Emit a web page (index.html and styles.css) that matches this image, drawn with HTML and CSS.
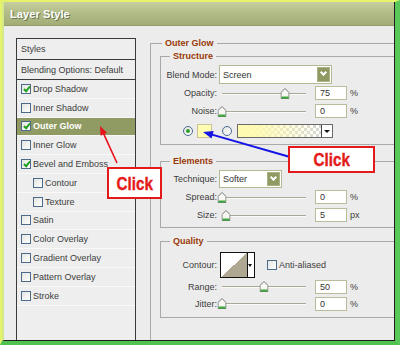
FILE: index.html
```html
<!DOCTYPE html>
<html>
<head>
<meta charset="utf-8">
<link rel="stylesheet" href="styles.css">
</head>
<body>
<div class="frame">
  <div class="dialog">
    <div class="titlebar"><span class="title">Layer Style</span></div>
    <div class="body">
      <div class="styles-list">
        <div class="head">Styles</div>
        <div class="head">Blending Options: Default</div>
        <div class="item"><span class="cb checked"></span>Drop Shadow</div>
        <div class="item"><span class="cb"></span>Inner Shadow</div>
        <div class="item selected"><span class="cb checked"></span>Outer Glow</div>
        <div class="item"><span class="cb"></span>Inner Glow</div>
        <div class="item"><span class="cb checked"></span>Bevel and Emboss</div>
        <div class="item sub"><span class="cb"></span>Contour</div>
        <div class="item sub"><span class="cb"></span>Texture</div>
        <div class="item"><span class="cb"></span>Satin</div>
        <div class="item"><span class="cb"></span>Color Overlay</div>
        <div class="item"><span class="cb"></span>Gradient Overlay</div>
        <div class="item"><span class="cb"></span>Pattern Overlay</div>
        <div class="item"><span class="cb"></span>Stroke</div>
      </div>

      <fieldset class="outer">
        <legend>Outer Glow</legend>

        <fieldset class="group structure">
          <legend>Structure</legend>
          <div class="row tall">
            <span class="lbl">Blend Mode:</span>
            <div class="select blend"><span>Screen</span><span class="dd"></span></div>
          </div>
          <div class="row">
            <span class="lbl">Opacity:</span>
            <div class="slider"><span class="thumb" style="left:75%"><svg width="9" height="11" viewBox="0 0 9 11"><path d="M0.5 10.5V4.5L4.5 0.5L8.5 4.5V10.5Z" fill="#f6f6f2" stroke="#777"/><rect x="1" y="8.5" width="7" height="2" fill="#3caa3c"/></svg></span></div>
            <span class="num">75</span><span class="unit">%</span>
          </div>
          <div class="row">
            <span class="lbl">Noise:</span>
            <div class="slider"><span class="thumb" style="left:0%"><svg width="9" height="11" viewBox="0 0 9 11"><path d="M0.5 10.5V4.5L4.5 0.5L8.5 4.5V10.5Z" fill="#f6f6f2" stroke="#777"/><rect x="1" y="8.5" width="7" height="2" fill="#3caa3c"/></svg></span></div>
            <span class="num">0</span><span class="unit">%</span>
          </div>
          <div class="row color-row">
            <span class="radio on"></span>
            <span class="swatch"></span>
            <span class="radio"></span>
            <div class="gradient"><span class="grad-fill"></span><span class="grad-dd"></span></div>
          </div>
        </fieldset>

        <fieldset class="group elements">
          <legend>Elements</legend>
          <div class="row">
            <span class="lbl">Technique:</span>
            <div class="select technique"><span>Softer</span><span class="dd"></span></div>
          </div>
          <div class="row">
            <span class="lbl">Spread:</span>
            <div class="slider"><span class="thumb" style="left:0%"><svg width="9" height="11" viewBox="0 0 9 11"><path d="M0.5 10.5V4.5L4.5 0.5L8.5 4.5V10.5Z" fill="#f6f6f2" stroke="#777"/><rect x="1" y="8.5" width="7" height="2" fill="#3caa3c"/></svg></span></div>
            <span class="num">0</span><span class="unit">%</span>
          </div>
          <div class="row">
            <span class="lbl">Size:</span>
            <div class="slider"><span class="thumb" style="left:5%"><svg width="9" height="11" viewBox="0 0 9 11"><path d="M0.5 10.5V4.5L4.5 0.5L8.5 4.5V10.5Z" fill="#f6f6f2" stroke="#777"/><rect x="1" y="8.5" width="7" height="2" fill="#3caa3c"/></svg></span></div>
            <span class="num">5</span><span class="unit">px</span>
          </div>
        </fieldset>

        <fieldset class="group quality">
          <legend>Quality</legend>
          <div class="row contour-row">
            <span class="lbl">Contour:</span>
            <div class="contour"><span class="curve"></span><span class="grad-dd"></span></div>
            <span class="cb aa"></span><span class="aa-text">Anti-aliased</span>
          </div>
          <div class="row q">
            <span class="lbl">Range:</span>
            <div class="slider"><span class="thumb" style="left:50%"><svg width="9" height="11" viewBox="0 0 9 11"><path d="M0.5 10.5V4.5L4.5 0.5L8.5 4.5V10.5Z" fill="#f6f6f2" stroke="#777"/><rect x="1" y="8.5" width="7" height="2" fill="#3caa3c"/></svg></span></div>
            <span class="num">50</span><span class="unit">%</span>
          </div>
          <div class="row q">
            <span class="lbl">Jitter:</span>
            <div class="slider"><span class="thumb" style="left:0%"><svg width="9" height="11" viewBox="0 0 9 11"><path d="M0.5 10.5V4.5L4.5 0.5L8.5 4.5V10.5Z" fill="#f6f6f2" stroke="#777"/><rect x="1" y="8.5" width="7" height="2" fill="#3caa3c"/></svg></span></div>
            <span class="num">0</span><span class="unit">%</span>
          </div>
        </fieldset>
      </fieldset>
    </div>
  </div>

  <div class="annot">
    <svg class="arrows" width="400" height="345" viewBox="0 0 400 345">
      <line x1="117" y1="163" x2="103.8" y2="134.2" stroke="#e8101a" stroke-width="1.6"/>
      <path d="M100 126L107 132.7L100.6 135.7Z" fill="#e8101a"/>
      <line x1="290" y1="157" x2="212" y2="134.6" stroke="#1414e6" stroke-width="2"/>
      <path d="M203 132L213.7 131L211.5 138.6Z" fill="#1414e6"/>
    </svg>
    <div class="click click-a"><span class="click-text">Click</span></div>
    <div class="click click-b"><span class="click-text">Click</span></div>
  </div>
</div>
</body>
</html>
```
FILE: styles.css
```css
html, body {
  margin: 0;
  padding: 0;
  background: #ffffff;
}

.frame {
  position: relative;
  width: 400px;
  height: 345px;
  box-sizing: border-box;
  border-top: 2px solid #e6f26a;
  border-left: 2px solid #e6f26a;
  border-right: 5px solid #58c858;
  border-bottom: 4px solid #4fc24f;
  overflow: hidden;
  font-family: "Liberation Sans", Arial, sans-serif;
  font-size: 9px;
  color: #3c3c3c;
}

.dialog {
  height: 100%;
  box-sizing: border-box;
  border-left: 2px solid #d3e98a;
  border-right: 1px solid #1e1e1e;
  border-bottom: 1px solid #1e1e1e;
  background: #ececec;
  display: flex;
  flex-direction: column;
  overflow: hidden;
}

.titlebar {
  height: 24px;
  flex: none;
  box-sizing: border-box;
  background: linear-gradient(#c6cf9d 0%, #b3bd88 45%, #a2ad76 100%);
  border-bottom: 1px solid #94a06a;
  display: flex;
  align-items: center;
  padding-left: 6px;
}

.title {
  font-size: 11px;
  font-weight: bold;
  color: #ffffff;
  text-shadow: 1px 1px 0 #6d7550;
  letter-spacing: 0.1px;
}

.body {
  flex: 1;
  display: flex;
  padding: 11px 0 0 12px;
  min-height: 0;
}

/* styles list */
.styles-list {
  width: 120px;
  flex: none;
  margin-top: 1px;
  box-sizing: border-box;
  border: 1px solid #3a3a3a;
  border-bottom: none;
  background: #eeeeee;
}

.head {
  height: 21px;
  box-sizing: border-box;
  border-bottom: 1px solid #3a3a3a;
  padding-left: 4px;
  display: flex;
  align-items: center;
}

.head + .head {
  height: 20px;
}

.item {
  height: 18.8px;
  box-sizing: border-box;
  border-bottom: 1px solid #f9f9f9;
  padding-left: 4px;
  display: flex;
  align-items: center;
  gap: 2px;
}

.item.sub {
  padding-left: 16px;
}

.item.selected {
  background: #8f9b62;
  color: #ffffff;
  font-weight: bold;
}

.cb {
  position: relative;
  width: 10px;
  height: 10px;
  box-sizing: border-box;
  border: 1px solid #4b6a8c;
  background: linear-gradient(135deg, #e4e4e0, #ffffff);
  flex: none;
}

.cb.checked::after {
  content: "";
  position: absolute;
  left: 2.5px;
  top: 0px;
  width: 2px;
  height: 5px;
  border-right: 2px solid #22a022;
  border-bottom: 2px solid #22a022;
  transform: rotate(40deg);
}

/* fieldsets */
fieldset {
  margin: 0;
  min-width: 0;
  border: 1px solid #a9a9a9;
  border-right: none;
}

legend {
  font-weight: bold;
  font-size: 9px;
  line-height: 12px;
  color: #9a3a08;
  padding: 0 3px;
}

.outer {
  flex: 1;
  margin-left: 14px;
  padding: 1px 0 0 9px;
  border-bottom: none;
}

.outer > legend {
  margin-left: 2px;
}

.group {
  padding: 3px 0 3px 0;
}

.group > legend {
  margin-left: 9px;
}

.elements {
  margin-top: 10px;
}

.quality {
  margin-top: 7px;
  padding-top: 5px;
  padding-bottom: 5px;
}

.row {
  height: 18px;
  display: flex;
  align-items: center;
}

.row.tall {
  height: 19px;
}

.row.q {
  height: 17px;
}

.lbl {
  width: 56px;
  margin-right: 2px;
  text-align: right;
  flex: none;
}

.select {
  height: 19px;
  box-sizing: border-box;
  border: 1px solid #b4b893;
  background: #ffffff;
  display: flex;
  align-items: center;
  justify-content: space-between;
  padding: 0 1px 0 3px;
  color: #333;
}

.select.blend {
  width: 113px;
}

.select.technique {
  width: 63px;
  height: 18px;
}

.dd {
  position: relative;
  width: 13px;
  height: 15px;
  box-sizing: border-box;
  background: #8e9a62;
  border: 1px solid #aab387;
}

.select.technique .dd {
  height: 14px;
}

.dd::after {
  content: "";
  position: absolute;
  left: 3px;
  top: 2px;
  width: 3px;
  height: 3px;
  border-right: 2px solid #ffffff;
  border-bottom: 2px solid #ffffff;
  transform: rotate(45deg);
}

.slider {
  position: relative;
  width: 84px;
  height: 11px;
  margin: 0 9px 0 3px;
  flex: none;
}

.slider::before {
  content: "";
  position: absolute;
  left: 0;
  right: 0;
  top: 5px;
  height: 1px;
  background: #a8aa98;
  border-bottom: 1px solid #fbfbf6;
}

.thumb {
  position: absolute;
  top: 0;
  width: 9px;
  height: 11px;
  transform: translateX(-50%);
}

.thumb svg {
  display: block;
}

.num {
  width: 32px;
  height: 14px;
  box-sizing: border-box;
  border: 1px solid #b9bd9c;
  background: #ffffff;
  padding-left: 4px;
  line-height: 12px;
  color: #333;
  flex: none;
}

.unit {
  margin-left: 3px;
}

.color-row {
  height: 20px;
  margin-top: 1px;
  padding-left: 22px;
}

.radio {
  position: relative;
  width: 10px;
  height: 10px;
  box-sizing: border-box;
  border-radius: 50%;
  border: 1px solid #4a6a92;
  background: linear-gradient(135deg, #e2e2dc, #ffffff);
  flex: none;
}

.radio.on::after {
  content: "";
  position: absolute;
  left: 2px;
  top: 2px;
  width: 4px;
  height: 4px;
  border-radius: 50%;
  background: #2aa02a;
}

.swatch {
  width: 15px;
  height: 14px;
  box-sizing: border-box;
  border: 1px solid #c9c39a;
  background: #fffbb2;
  margin: 0 10px 0 4px;
  flex: none;
}

.gradient {
  width: 96px;
  height: 14px;
  box-sizing: border-box;
  border: 1px solid #6a6a6a;
  margin-left: 5px;
  display: flex;
  flex: none;
}

.grad-fill {
  flex: 1;
  background:
    linear-gradient(to right, #fffbb0 0%, rgba(255, 251, 176, 0.9) 25%, rgba(255, 251, 176, 0) 100%),
    repeating-conic-gradient(#d6d6d6 0 25%, #ffffff 0 50%) 0 0 / 6px 6px;
}

.grad-dd {
  position: relative;
  width: 10px;
  border-left: 1px solid #444;
  background: #ffffff;
  flex: none;
}

.grad-dd::after {
  content: "";
  position: absolute;
  left: 2px;
  top: 50%;
  margin-top: -1px;
  border-left: 3px solid transparent;
  border-right: 3px solid transparent;
  border-top: 3px solid #111;
}

.contour-row {
  height: 26px;
}

.contour {
  width: 35px;
  height: 26px;
  box-sizing: border-box;
  border: 1px solid #111;
  display: flex;
  margin-left: 1px;
  flex: none;
}

.curve {
  flex: 1;
  background: linear-gradient(to top left, #aea893 50%, #ffffff 50%);
}

.contour .grad-dd {
  width: 6px;
  border-left-color: #111;
}

.contour .grad-dd::after {
  left: 0px;
  border-left-width: 2.5px;
  border-right-width: 2.5px;
}

.cb.aa {
  margin-left: 12px;
}

.aa-text {
  margin-left: 2px;
}

/* annotations */
.annot {
  position: absolute;
  left: -2px;
  top: -2px;
  width: 400px;
  height: 345px;
  pointer-events: none;
}

.arrows {
  position: absolute;
  left: 0;
  top: 0;
}

.click {
  position: absolute;
  box-sizing: border-box;
  border: 2px solid #e41a1a;
  background: #ffffff;
  display: flex;
  align-items: center;
  justify-content: center;
}

.click-text {
  display: inline-block;
  color: #e41a1a;
  font-family: "Liberation Sans", Arial, sans-serif;
  font-weight: bold;
  font-size: 19px;
  line-height: 19px;
  transform: scaleX(0.8);
  -webkit-text-stroke: 0.4px #e41a1a;
}

.click-a {
  left: 107px;
  top: 167px;
  width: 55px;
  height: 32px;
}

.click-b {
  left: 288px;
  top: 146px;
  width: 87px;
  height: 27px;
}
```
